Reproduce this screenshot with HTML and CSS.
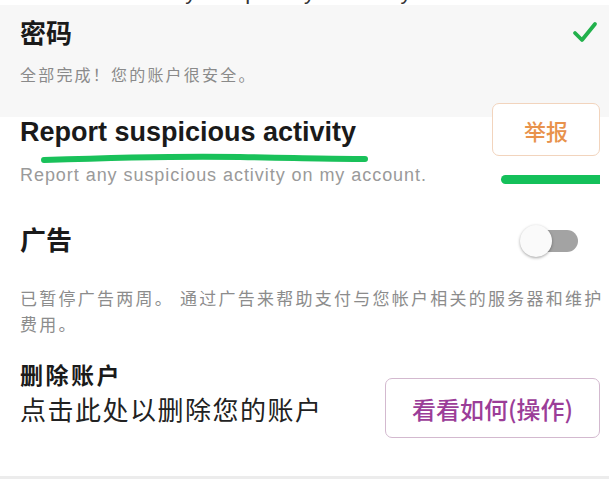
FILE: index.html
```html
<!DOCTYPE html>
<html lang="zh-CN">
<head>
<meta charset="utf-8">
<link rel="stylesheet" href="styles.css">
</head>
<body>
<div class="page">
  <div class="cut"><span class="cut-text">Your security and privacy summary</span></div>
  <section class="panel">
    <div class="row">
      <h2 class="title">密码</h2>
      <svg class="check" viewBox="0 0 26 24" width="26" height="24"><path d="M3 13 L10 20 L23 4" fill="none" stroke="#22b14c" stroke-width="3.8" stroke-linecap="round" stroke-linejoin="round"/></svg>
    </div>
    <p class="sub">全部完成！您的账户很安全。</p>
  </section>
  <section class="report">
    <div class="report-text">
      <h2 class="title en">Report suspicious activity</h2>
      <p class="desc">Report any suspicious activity on my account.</p>
    </div>
    <div class="report-action">
      <button class="btn-report">举报</button>
    </div>
    <svg class="mark-underline" viewBox="0 0 330 12" width="330" height="12"><path d="M4 7 C 90 4, 150 3, 200 4 S 300 6, 325 6" fill="none" stroke="#19c15a" stroke-width="6" stroke-linecap="round"/></svg>
    <div class="mark-bar"></div>
  </section>
  <section class="ads">
    <div class="row ads-row">
      <h2 class="title">广告</h2>
      <div class="toggle"><span class="knob"></span></div>
    </div>
    <p class="ads-desc">已暂停广告两周。 通过广告来帮助支付与您帐户相关的服务器和维护费用。</p>
  </section>
  <section class="delete">
    <div class="delete-text">
      <h3 class="delete-title">删除账户</h3>
      <p class="delete-desc">点击此处以删除您的账户</p>
    </div>
    <button class="btn-how">看看如何(操作)</button>
  </section>
  <div class="divider"></div>
</div>
</body>
</html>
```
FILE: styles.css
```css
* { box-sizing: border-box; }
html, body { margin: 0; padding: 0; background: #ffffff; }
body {
  font-family: "Noto Sans CJK SC", "Noto Sans", sans-serif;
  color: #1c1c1c;
  width: 609px;
  height: 489px;
  overflow: hidden;
}
.page { position: relative; }
h2, h3, p { margin: 0; }

.cut {
  height: 5px;
  overflow: hidden;
  padding-left: 70px;
}
.cut-text {
  display: block;
  font-family: "Liberation Sans", sans-serif;
  font-size: 22px;
  line-height: 22px;
  margin-top: -19px;
  color: #333;
}

.panel {
  background: #f7f7f7;
  height: 112px;
  padding: 12px 11px 0 20px;
}
.row {
  display: flex;
  justify-content: space-between;
  align-items: center;
}
.title {
  font-size: 26px;
  line-height: 30px;
  font-weight: 700;
  color: #1a1a1a;
}
.title.en {
  font-family: "Liberation Sans", "Noto Sans CJK SC", sans-serif;
  font-size: 27px;
}
.sub {
  margin-top: 17px;
  font-size: 16px;
  line-height: 20px;
  color: #8a8a8a;
  letter-spacing: 2.2px;
}

.report {
  position: relative;
  display: flex;
  justify-content: space-between;
  align-items: flex-start;
  padding: 0 9px 0 20px;
}
.desc {
  margin-top: 17px;
  font-family: "Liberation Sans", sans-serif;
  font-size: 18px;
  line-height: 22px;
  color: #9a9a9a;
  letter-spacing: 0.95px;
}
.report-action { margin-top: -14px; }
.btn-report {
  display: block;
  width: 108px;
  height: 53px;
  background: #ffffff;
  border: 1.5px solid #f2d4bd;
  border-radius: 7px;
  color: #e8924c;
  font-family: "Noto Sans CJK SC", sans-serif;
  font-size: 22px;
  font-weight: 500;
}
.mark-underline {
  position: absolute;
  left: 40px;
  top: 36px;
}
.mark-bar {
  position: absolute;
  left: 501px;
  top: 58px;
  width: 99px;
  height: 9px;
  border-radius: 4.5px 0 0 4.5px;
  background: #14c05a;
}

.ads {
  padding: 38px 0 0 20px;
}
.ads-row { padding-right: 31px; }
.toggle {
  position: relative;
  width: 58px;
  height: 22px;
  margin-top: 3px;
}
.toggle::before {
  content: "";
  position: absolute;
  left: 10px;
  right: 0;
  top: 0;
  bottom: 0;
  border-radius: 11px;
  background: #a3a3a3;
}
.knob {
  position: absolute;
  left: 0;
  top: -5px;
  width: 32px;
  height: 32px;
  border-radius: 50%;
  background: #fafafa;
  box-shadow: 0 1px 3px rgba(0,0,0,0.35);
}
.ads-desc {
  margin-top: 31px;
  padding-right: 0;
  font-size: 17px;
  line-height: 26px;
  color: #8c8c8c;
  letter-spacing: 2.25px;
}

.delete {
  display: flex;
  justify-content: space-between;
  align-items: flex-start;
  padding: 23px 9px 0 20px;
}
.delete-title {
  font-size: 23px;
  line-height: 28px;
  font-weight: 700;
  color: #1a1a1a;
  letter-spacing: 2.5px;
}
.delete-desc {
  margin-top: 5px;
  font-size: 26px;
  line-height: 32px;
  color: #222;
  letter-spacing: 1.5px;
}
.btn-how {
  display: block;
  width: 215px;
  height: 60px;
  margin-top: 18px;
  background: #ffffff;
  border: 1.5px solid #d3b9cf;
  border-radius: 7px;
  color: #9b3d98;
  font-family: "Noto Sans CJK SC", sans-serif;
  font-size: 24px;
  font-weight: 500;
}

.divider {
  margin-top: 38px;
  height: 3px;
  background: #ececec;
}
```
